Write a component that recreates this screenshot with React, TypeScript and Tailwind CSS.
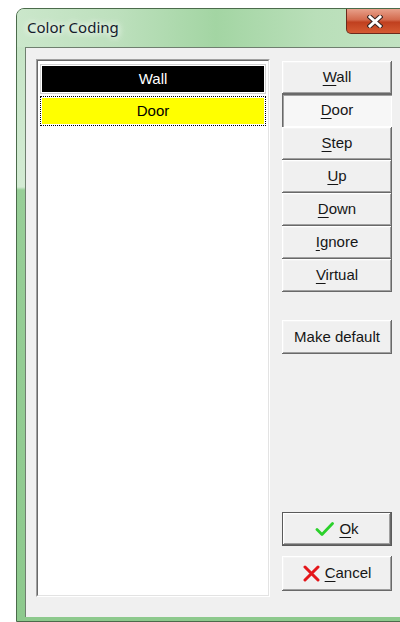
import React from 'react';

const items = [
  { label: 'Wall', bg: 'bg-black', fg: 'text-white', focused: false },
  { label: 'Door', bg: 'bg-[#ffff00]', fg: 'text-black', focused: true },
];

const buttons = [
  { key: 'W', rest: 'all' },
  { key: 'D', rest: 'oor', pressed: true },
  { key: 'S', rest: 'tep' },
  { key: 'U', rest: 'p' },
  { key: 'D', rest: 'own' },
  { key: 'I', rest: 'gnore' },
  { key: 'V', rest: 'irtual' },
];

const raised =
  'shadow-[inset_-1px_-1px_#696969,inset_1px_1px_#ffffff,inset_-2px_-2px_#a0a0a0,inset_2px_2px_#f4f4f4]';
const sunken =
  'shadow-[inset_1px_1px_#696969,inset_2px_2px_#a0a0a0,inset_-1px_-1px_#ffffff]';

function Mnemonic({ k, rest }: { k: string; rest: string }) {
  return (
    <span>
      <span className="underline decoration-1 underline-offset-[3px]">{k}</span>
      {rest}
    </span>
  );
}

function Button({
  children,
  pressed,
  isDefault,
  className = '',
}: {
  children: React.ReactNode;
  pressed?: boolean;
  isDefault?: boolean;
  className?: string;
}) {
  const face = pressed ? `bg-[#f7f7f7] ${sunken}` : `bg-[#f0f0f0] ${raised}`;
  return (
    <div
      className={`w-[110px] flex items-center justify-center text-[15px] text-[#161616] ${
        isDefault ? 'border border-[#5a5a5a]' : ''
      } ${className}`}
    >
      <div className={`w-full h-full flex items-center justify-center gap-[5px] ${face}`}>
        {children}
      </div>
    </div>
  );
}

function CheckIcon() {
  return (
    <svg width="19" height="16" viewBox="0 0 19 16">
      <path
        d="M2 8.5 L7 13.5 L17.5 2.5"
        fill="none"
        stroke="#2bd12b"
        strokeWidth="2.8"
        strokeLinecap="round"
        strokeLinejoin="round"
      />
    </svg>
  );
}

function CrossIcon() {
  return (
    <svg width="17" height="17" viewBox="0 0 17 17">
      <path
        d="M2 2 L15 15 M15 2 L2 15"
        fill="none"
        stroke="#e4161a"
        strokeWidth="3"
        strokeLinecap="round"
      />
    </svg>
  );
}

export default function App() {
  return (
    <div
      className="w-[400px] h-[622px] bg-white overflow-hidden pt-[8px] pl-[16px]"
      style={{ fontFamily: '"Liberation Sans", Arial, sans-serif' }}
    >
      {/* aero frame */}
      <div className="w-[400px] h-[614px] rounded-t-[8px] border border-[#4b6b4b] flex flex-col bg-[linear-gradient(180deg,#c3e3c3_0px,#d3ebd3_178px,#97ce97_181px,#8dc98d_100%)]">
        <div className="h-[38px] shrink-0 flex items-start justify-between rounded-t-[7px] bg-[linear-gradient(90deg,#cbe7cb_0%,#bde0bd_25%,#a3d5a3_50%,#b9dfb9_75%,#c3e3c3_100%)]">
          <div
            className="pl-[10px] pt-[9px] text-[15px] leading-[18px] text-[#151b2b] [text-shadow:0_0_10px_#ffffff,0_0_6px_#ffffff]"
            style={{ fontFamily: '"Noto Sans", "Open Sans", sans-serif' }}
          >
            Color Coding
          </div>
          <div className="mr-[11px] w-[58px] h-[25px] rounded-bl-[5px] rounded-br-[5px] border border-t-0 border-[#6b2a1c] bg-[linear-gradient(180deg,#e8a08a_0%,#d36a4d_45%,#c0401f_55%,#d55b32_100%)] flex items-center justify-center">
            <svg width="16" height="13" viewBox="0 0 16 13">
              <path
                d="M3 2 L13 11 M13 2 L3 11"
                stroke="#3b2420"
                strokeWidth="5"
                strokeLinecap="square"
              />
              <path
                d="M3 2 L13 11 M13 2 L3 11"
                stroke="#ffffff"
                strokeWidth="3"
                strokeLinecap="square"
              />
            </svg>
          </div>
        </div>

        <div className="flex-1 ml-[8px] mb-[4px] border-l border-t border-[#6f7f6f] bg-[#f0f0f0] flex pl-[10px] pt-[11px]">
          {/* list box */}
          <div className="w-[234px] h-[538px] border-t border-l border-[#a0a0a0] border-b-white border-r-white border-b border-r">
            <div className="w-full h-full border-t border-l border-[#696969] border-b border-r border-b-[#e3e3e3] border-r-[#e3e3e3] bg-white pt-[2px] px-[1px]">
              {items.map((it) => (
                <div key={it.label} className="h-[32px] p-[1px]">
                  <div
                    className={`h-full p-[1px] ${
                      it.focused ? 'border border-dotted border-black' : 'border border-white'
                    }`}
                  >
                    <div
                      className={`h-full flex items-center justify-center text-[15px] ${it.bg} ${it.fg} ${
                        it.focused ? '' : 'outline outline-1 outline-offset-1 outline-[#d0d0d0]'
                      }`}
                    >
                      {it.label}
                    </div>
                  </div>
                </div>
              ))}
            </div>
          </div>

          {/* command buttons */}
          <div className="ml-[12px] flex flex-col pt-[2px]">
            {buttons.map((b, i) => (
              <Button key={i} pressed={b.pressed} className="h-[33px]">
                <Mnemonic k={b.key} rest={b.rest} />
              </Button>
            ))}
            <Button className="h-[34px] mt-[28px]">Make default</Button>
            <Button isDefault className="h-[34px] mt-[158px]">
              <CheckIcon />
              <Mnemonic k="O" rest="k" />
            </Button>
            <Button className="h-[35px] mt-[10px]">
              <CrossIcon />
              <Mnemonic k="C" rest="ancel" />
            </Button>
          </div>
        </div>
      </div>
    </div>
  );
}
